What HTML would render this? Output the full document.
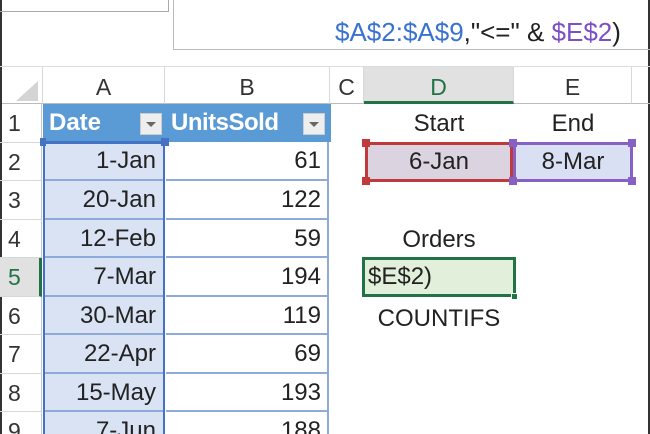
<!DOCTYPE html><html><head><style>
html,body{margin:0;width:650px;height:434px;overflow:hidden}
body{background:#fff;font-family:"Liberation Sans",sans-serif;position:relative}
div{position:absolute;box-sizing:border-box}
.t{font-size:24px;color:#222;line-height:38px;white-space:nowrap}
.rh{left:0;width:42px;text-align:left;padding-left:8px;font-size:23px;color:#333;border-bottom:1px solid #d8d8d8;border-right:1px solid #c8c8c8}
.ch{top:67px;height:37px;font-size:23px;color:#333;text-align:center;line-height:40px;border-right:1px solid #d8d8d8;border-bottom:1px solid #bbb}
.ca{left:43px;width:121px;background:#d9e3f3;border-bottom:2px solid #8eaadb;text-align:right;padding-right:8px}
.cb{left:166px;width:163px;background:#fff;border-bottom:2px solid #8eaadb;text-align:right;padding-right:6px;border-right:2px solid #8eaadb}
.h{width:8px;height:8px}
</style></head><body>
<div style="left:0;top:0;width:2px;height:434px;background:#333"></div>
<div style="right:0;top:0;width:2px;height:434px;background:#333"></div>
<div style="left:0;top:0;width:169px;height:12px;border:1px solid #aaa;border-top:none;border-left:none"></div>
<div style="left:173px;top:-2px;width:480px;height:52px;border:1px solid #bbb"></div>
<div class="t" style="left:335px;top:13px;font-size:26px"><span style="color:#3a72d0">$A$2:$A$9</span>,"&lt;=" &amp; <span style="color:#7d4fc4">$E$2</span>)</div>
<div style="left:0;top:66px;width:650px;height:1px;background:#ddd"></div>
<div class="ch" style="left:2px;width:41px;"><div style="left:14px;top:14px;width:0;height:0;border-left:22px solid transparent;border-bottom:20px solid #d4d4d4"></div></div>
<div class="ch" style="left:43px;width:122px">A</div>
<div class="ch" style="left:165px;width:165px">B</div>
<div class="ch" style="left:330px;width:34px">C</div>
<div class="ch" style="left:364px;width:150px;background:#e1e1e1;border-bottom:3px solid #217346;color:#217346">D</div>
<div class="ch" style="left:514px;width:118px">E</div>
<div class="ch" style="left:632px;width:18px;border-right:none"></div>
<div class="rh t" style="top:104px;height:39px">1</div>
<div class="rh t" style="top:143px;height:38px">2</div>
<div class="rh t" style="top:181px;height:39px">3</div>
<div class="rh t" style="top:220px;height:38px">4</div>
<div class="rh t" style="top:258px;height:39px;background:#e1e1e1;color:#217346;border-right:3px solid #217346">5</div>
<div class="rh t" style="top:297px;height:38px">6</div>
<div class="rh t" style="top:335px;height:39px">7</div>
<div class="rh t" style="top:374px;height:38px">8</div>
<div class="rh t" style="top:412px;height:39px">9</div>
<div style="left:43px;top:104px;width:288px;height:38px;background:#5b9bd5"></div>
<div class="t" style="left:49px;top:104px;color:#fff;font-weight:bold;font-size:24px">Date</div>
<div style="left:140px;top:113px;width:22px;height:22px;background:#eee;border:1px solid #ccc"><div style="left:5px;top:8px;border-left:5px solid transparent;border-right:5px solid transparent;border-top:5px solid #666"></div></div>
<div class="t" style="left:171px;top:104px;color:#fff;font-weight:bold;font-size:24px;letter-spacing:-0.5px">UnitsSold</div>
<div style="left:303px;top:113px;width:22px;height:22px;background:#eee;border:1px solid #ccc"><div style="left:5px;top:8px;border-left:5px solid transparent;border-right:5px solid transparent;border-top:5px solid #666"></div></div>
<div class="t ca" style="top:142px;height:39px">1-Jan</div>
<div class="t ca" style="top:181px;height:39px">20-Jan</div>
<div class="t ca" style="top:220px;height:38px">12-Feb</div>
<div class="t ca" style="top:258px;height:39px">7-Mar</div>
<div class="t ca" style="top:297px;height:38px">30-Mar</div>
<div class="t ca" style="top:335px;height:39px">22-Apr</div>
<div class="t ca" style="top:374px;height:38px">15-May</div>
<div class="t ca" style="top:412px;height:39px">7-Jun</div>
<div class="t cb" style="top:142px;height:39px">61</div>
<div class="t cb" style="top:181px;height:39px">122</div>
<div class="t cb" style="top:220px;height:38px">59</div>
<div class="t cb" style="top:258px;height:39px">194</div>
<div class="t cb" style="top:297px;height:38px">119</div>
<div class="t cb" style="top:335px;height:39px">69</div>
<div class="t cb" style="top:374px;height:38px">193</div>
<div class="t cb" style="top:412px;height:39px">188</div>
<div style="left:43px;top:141px;width:122px;height:300px;border:2px solid #4472c4;border-bottom:none;border-top-width:3px"></div>
<div class="h" style="left:40px;top:138px;background:#4472c4;width:6px"></div>
<div class="h" style="left:161px;top:138px;background:#4472c4"></div>
<div class="t" style="left:364px;top:105px;width:150px;text-align:center">Start</div>
<div class="t" style="left:514px;top:105px;width:118px;text-align:center">End</div>
<div class="t" style="left:365px;top:142px;width:148px;height:40px;background:#dcd3e0;border:3px solid #c0393b;text-align:center;line-height:34px">6-Jan</div>
<div class="t" style="left:513px;top:142px;width:120px;height:40px;background:#d9e0f3;border:3px solid #8660c5;text-align:center;line-height:34px">8-Mar</div>
<div class="h" style="left:362px;top:139px;background:#c0393b"></div>
<div class="h" style="left:362px;top:177px;background:#c0393b"></div>
<div class="h" style="left:509px;top:139px;background:#8660c5"></div>
<div class="h" style="left:509px;top:177px;background:#8660c5"></div>
<div class="h" style="left:628px;top:139px;background:#8660c5"></div>
<div class="h" style="left:628px;top:177px;background:#8660c5"></div>
<div class="t" style="left:364px;top:221px;width:150px;text-align:center">Orders</div>
<div class="t" style="left:362px;top:257px;width:154px;height:40px;background:#e2efda;border:3px solid #217346;padding-left:3px;line-height:34px">$E$2)</div>
<div class="h" style="left:511px;top:293px;width:7px;height:7px;background:#217346;border:1px solid #fff"></div>
<div class="t" style="left:364px;top:300px;width:150px;text-align:center">COUNTIFS</div>
</body></html>
